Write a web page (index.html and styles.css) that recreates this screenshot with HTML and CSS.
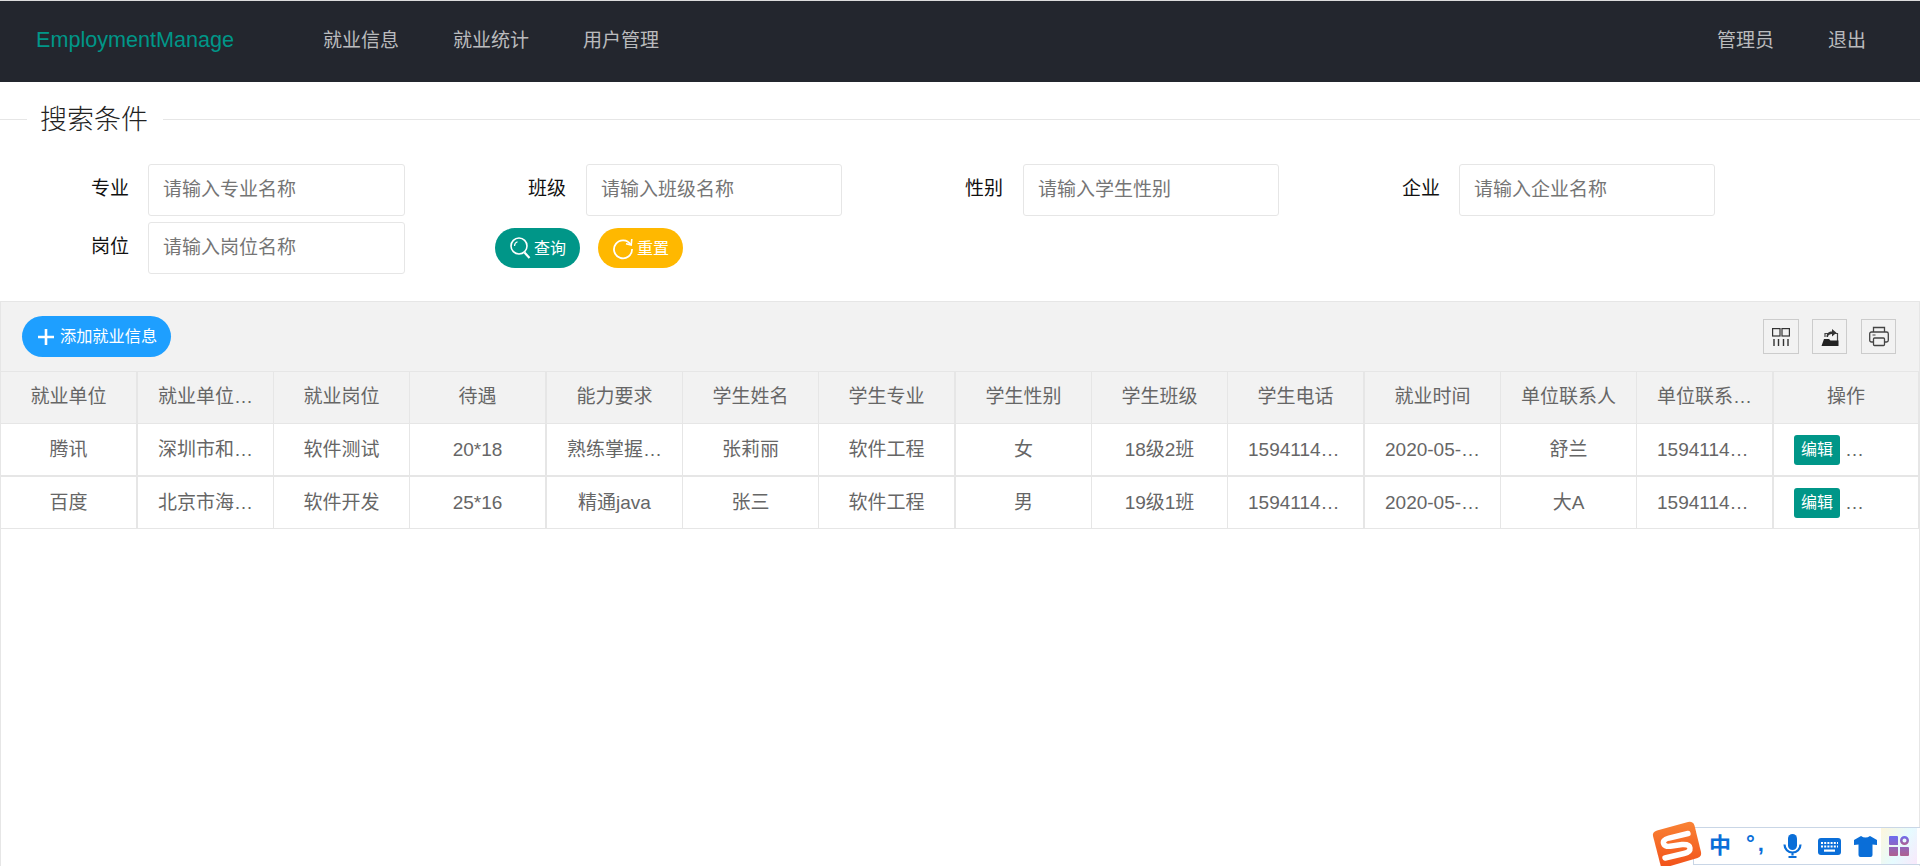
FILE: index.html
```html
<!DOCTYPE html>
<html lang="zh-CN">
<head>
<meta charset="utf-8">
<title>EmploymentManage</title>
<link rel="stylesheet" href="styles.css">
</head>
<body>
<header class="nav">
  <div class="logo">EmploymentManage</div>
  <nav class="menu">
    <a>就业信息</a><a>就业统计</a><a>用户管理</a>
  </nav>
  <div class="menu menu-right">
    <a>管理员</a><a>退出</a>
  </div>
</header>

<div class="legend"><span class="legend-title">搜索条件</span></div>

<form class="search">
  <div class="field"><label>专业</label><input placeholder="请输入专业名称"></div>
  <div class="field"><label>班级</label><input placeholder="请输入班级名称"></div>
  <div class="field"><label>性别</label><input placeholder="请输入学生性别"></div>
  <div class="field"><label>企业</label><input placeholder="请输入企业名称"></div>
  <div class="field"><label>岗位</label><input placeholder="请输入岗位名称"></div>
  <div class="actions">
    <button type="button" class="btn btn-green">
      <svg width="22" height="24" viewBox="0 0 22 24" fill="none" stroke="#fff"><circle cx="10" cy="10" r="8" stroke-width="1.6"/><path d="M5.500 10a4.500 4.500 0 0 1 3-4.200" stroke-width="1.200"/><path d="M15.500 16.500l5 5.500" stroke-width="2.200"/></svg>
      <span>查询</span>
    </button>
    <button type="button" class="btn btn-yellow">
      <svg width="22" height="24" viewBox="0 0 22 24" fill="none" stroke="#fff" stroke-width="1.800"><path d="M18.600 8.500A9 9 0 1 0 20 13"/><path d="M14 7.800l5.200 1.200 .6-6" stroke-width="1.600"/></svg>
      <span>重置</span>
    </button>
  </div>
</form>

<section class="panel">
  <div class="toolbar">
    <button type="button" class="btn-add">
      <svg width="16" height="16" viewBox="0 0 16 16"><path d="M8 0v16M0 8h16" stroke="#fff" stroke-width="2.600"/></svg>
      <span>添加就业信息</span>
    </button>
    <div class="tools">
      <span class="tool"><svg width="18" height="18" viewBox="0 0 18 18" fill="none" stroke="#333" stroke-width="1.200"><rect x=".6" y=".6" width="7.400" height="7.400"/><rect x="10" y=".6" width="7.400" height="7.400"/><path d="M2 11v7M6.500 11v7M11.500 11v7M16 11v7" stroke-width="1.400"/></svg></span>
      <span class="tool"><svg width="20" height="20" viewBox="0 0 20 20"><path d="M5 10V6.500h3M14 6.500h3.500V14" fill="none" stroke="#444" stroke-width="1.200"/><path d="M1.500 19l2.500-7h5l1.500 1.500h8V19z" fill="#222"/><path d="M6.500 10c0-4 2.500-5.500 5.500-5.500V2l4.500 3.800-4.500 3.700V7c-2 0-3.800 .8-4 3z" fill="#333"/></svg></span>
      <span class="tool"><svg width="20" height="21" viewBox="0 0 20 21" fill="none" stroke="#444" stroke-width="1.300"><path d="M4.500 6V1.500h11V6"/><path d="M4.500 16H2.500a1.800 1.800 0 0 1-1.800-1.800V7.800A1.800 1.800 0 0 1 2.500 6h15a1.800 1.800 0 0 1 1.800 1.800v6.400a1.800 1.800 0 0 1-1.800 1.800h-2"/><rect x="4.500" y="12" width="11" height="7.500" rx="1"/><path d="M3.500 9h3" stroke-width="1"/></svg></span>
    </div>
  </div>
  <table class="grid">
    <thead>
      <tr><th>就业单位</th><th class="clip">就业单位地址</th><th>就业岗位</th><th>待遇</th><th>能力要求</th><th>学生姓名</th><th>学生专业</th><th>学生性别</th><th>学生班级</th><th>学生电话</th><th>就业时间</th><th>单位联系人</th><th class="clip">单位联系电话</th><th>操作</th></tr>
    </thead>
    <tbody>
      <tr><td>腾讯</td><td class="clip">深圳市和平区科技园</td><td>软件测试</td><td>20*18</td><td class="clip">熟练掌握测试技术</td><td>张莉丽</td><td>软件工程</td><td>女</td><td>18级2班</td><td class="clip">15941140000</td><td class="clip">2020-05-20</td><td>舒兰</td><td class="clip">15941140000</td><td class="ops"><span class="tag">编辑</span><span class="more">…</span></td></tr>
      <tr><td>百度</td><td class="clip">北京市海淀区上地十街</td><td>软件开发</td><td>25*16</td><td>精通java</td><td>张三</td><td>软件工程</td><td>男</td><td>19级1班</td><td class="clip">15941140000</td><td class="clip">2020-05-20</td><td>大A</td><td class="clip">15941140000</td><td class="ops"><span class="tag">编辑</span><span class="more">…</span></td></tr>
    </tbody>
  </table>
</section>

<aside class="ime">
  <svg class="ime-logo" width="50" height="46" viewBox="0 0 50 46">
    <defs><linearGradient id="imeg" x1="0" y1="0" x2="0" y2="1"><stop offset="0" stop-color="#f98335"/><stop offset="1" stop-color="#f2521a"/></linearGradient></defs>
    <path d="M5 9.500 L36 1 Q41 0 42.500 4.500 L49 31 Q50 35.500 45.500 37 L15 46 H9 L1 15 Q0 11 5 9.500z" fill="url(#imeg)"/>
    <path d="M36 12.500 L17 17 Q9.500 19 12 23.500 Q13.500 26 20 25 L30 23.500 Q37.500 23 38 27 Q38.500 31 32 32.500 L13 37" fill="none" stroke="#fff" stroke-width="5.400" stroke-linecap="round"/>
  </svg>
  <span class="ime-zh">中</span>
  <span class="ime-punc">°,</span>
  <svg class="ime-mic" width="19" height="24" viewBox="0 0 19 24" fill="none" stroke="#0a6ed8"><rect x="5" y="0" width="9" height="16" rx="4.500" fill="#0a6ed8" stroke="none"/><path d="M1.500 10.500a8 8 0 0 0 16 0M9.500 18.500v3M5.500 23h8" stroke-width="2.200"/></svg>
  <svg class="ime-kb" width="23" height="17" viewBox="0 0 23 17"><rect width="23" height="17" rx="3" fill="#0a6ed8"/><path d="M3 5h17M3 8.500h17" stroke="#fff" stroke-width="2" stroke-dasharray="2 1.200"/><rect x="6" y="11.500" width="11" height="2.200" fill="#fff"/></svg>
  <svg class="ime-shirt" width="23" height="21" viewBox="0 0 23 21"><path d="M7 0 Q11.500 3 16 0 L23 4 V9 L18.500 8.500 V19 Q18.500 21 16.500 21 H6.500 Q4.500 21 4.500 19 V8.500 L0 9 V4z" fill="#0a6ed8"/></svg>
  <span class="ime-apps">
    <svg width="20" height="20" viewBox="0 0 20 20"><defs><linearGradient id="appg" x1="0" y1="0" x2="0" y2="1"><stop offset="0" stop-color="#6c6cf0"/><stop offset="1" stop-color="#b0608f"/></linearGradient></defs><path d="M1 0h7a1 1 0 0 1 1 1v8H1a1 1 0 0 1-1-1V1a1 1 0 0 1 1-1zM11 11h8a1 1 0 0 1 1 1v7a1 1 0 0 1-1 1h-7a1 1 0 0 1-1-1zM0 11h9v8a1 1 0 0 1-1 1H1a1 1 0 0 1-1-1z" fill="url(#appg)"/><path d="M15.500 0a4.500 4.500 0 1 1 0 9 4.500 4.500 0 1 1 0-9zm0 2.500a2 2 0 1 0 0 4 2 2 0 1 0 0-4z" fill="url(#appg)"/></svg>
  </span>
</aside>
</body>
</html>
```

FILE: styles.css
```css
* { box-sizing: border-box; }

html, body {
  margin: 0;
  height: 866px;
  overflow: hidden;
}

body {
  display: flex;
  flex-direction: column;
  background: #fff;
  color: #666;
  font-family: "Liberation Sans", "Noto Sans CJK SC", sans-serif;
  font-size: 19px;
}

/* top bar */
.nav {
  flex: none;
  display: flex;
  align-items: center;
  height: 82px;
  padding-right: 54px;
  padding-bottom: 3px;
  background: #23262e;
  border-top: 1px solid #dcdcdc;
}

.logo {
  flex: none;
  width: 323px;
  padding-left: 36px;
  color: #009688;
  font-size: 21.6px;
}

.menu {
  display: flex;
  gap: 54px;
  padding-bottom: 3px;
  color: rgba(255, 255, 255, .7);
  font-size: 19px;
}

.menu-right { margin-left: auto; }

/* legend */
.legend {
  flex: none;
  display: flex;
  align-items: center;
  height: 38px;
  margin-top: 18px;
}

.legend::before,
.legend::after {
  content: "";
  height: 1px;
  background: #e6e6e6;
}

.legend::before { flex: none; width: 27px; }
.legend::after { flex: 1; }

.legend-title {
  padding: 2px 15px 0 13px;
  color: #222;
  font-size: 27px;
  font-weight: 300;
  line-height: 38px;
}

/* search form */
.search {
  flex: none;
  display: grid;
  grid-template-columns: repeat(4, 437px);
  row-gap: 6px;
  margin-top: 26px;
}

.field {
  display: flex;
  align-items: center;
  height: 52px;
}

.field label {
  flex: none;
  width: 129px;
  margin-right: 19px;
  padding-bottom: 8px;
  color: #111;
  font-size: 19px;
  text-align: right;
}

.field input {
  width: 256px;
  height: 52px;
  padding: 0 14px;
  border: 1px solid #e6e6e6;
  border-radius: 3px;
  outline: none;
  font: inherit;
  color: #666;
  background: #fff;
}

.field:first-child input,
.field:nth-child(5) input { width: 257px; }

.field:nth-child(2) input,
.field:nth-child(3) input { margin-left: 1px; }

.field input::placeholder { color: #757575; }

.actions {
  display: flex;
  align-items: center;
  gap: 18px;
  padding-left: 58px;
}

.btn {
  display: flex;
  align-items: center;
  justify-content: center;
  gap: 3px;
  width: 85px;
  height: 40px;
  padding: 0;
  border: 0;
  border-radius: 20px;
  color: #fff;
  font: inherit;
  font-size: 16px;
}

.btn span { padding-bottom: 3px; }

.btn-green { background: #009688; }
.btn-yellow { background: #ffb800; }

/* table panel */
.panel {
  flex: 1;
  margin-top: 27px;
  border: 1px solid #e6e6e6;
  border-bottom: 0;
}

.toolbar {
  display: flex;
  align-items: center;
  justify-content: space-between;
  height: 70px;
  padding: 0 23px 0 21px;
  background: #f2f2f2;
  border-bottom: 1px solid #e6e6e6;
}

.btn-add {
  display: flex;
  align-items: center;
  gap: 6px;
  width: 149px;
  height: 41px;
  padding: 0 0 0 16px;
  border: 0;
  border-radius: 21px;
  background: #1e9fff;
  color: #fff;
  font: inherit;
  font-size: 16.2px;
}

.btn-add span { padding-bottom: 3px; }

.tools {
  display: flex;
  gap: 13px;
}

.tool {
  display: flex;
  align-items: center;
  justify-content: center;
  width: 36px;
  height: 35px;
  border: 1px solid #ccc;
}

.tool + .tool { width: 35px; }
.tool + .tool + .tool { margin-left: 1px; }

/* grid */
.grid {
  width: 1918px;
  table-layout: fixed;
  border-collapse: separate;
  border-spacing: 0;
}

.grid th,
.grid td {
  width: 136px;
  padding: 1px 19px 0;
  border-right: 1px solid #e6e6e6;
  border-bottom: 1px solid #e6e6e6;
  overflow: hidden;
  color: #666;
  font-weight: 400;
  line-height: 26px;
  text-align: center;
  text-overflow: ellipsis;
  white-space: nowrap;
}

.grid th { height: 52px; padding-top: 0; padding-bottom: 2px; background: #f2f2f2; }
.grid td { height: 52px; }
.grid tbody tr:first-child td { height: 53px; border-bottom-width: 2px; }

.grid th.clip,
.grid td.clip {
  padding-left: 20px;
  padding-right: 18px;
}

.grid th:nth-child(3n + 1),
.grid td:nth-child(3n + 1) {
  width: 137px;
  border-right-width: 2px;
}

.grid th:last-child,
.grid td:last-child {
  width: 145px;
  border-right-width: 1px;
}

.grid td.ops {
  padding: 0 0 0 20px;
  text-align: left;
}

.tag {
  display: inline-block;
  width: 46px;
  height: 30px;
  border-radius: 3px;
  background: #009688;
  color: #fff;
  font-size: 16px;
  line-height: 30px;
  text-align: center;
  vertical-align: middle;
}

.more {
  margin-left: 5px;
  vertical-align: middle;
}

/* input method bar */
.ime {
  position: absolute;
  right: 0;
  bottom: 1px;
  display: flex;
  align-items: center;
  width: 227px;
  height: 38px;
  background: #fff;
  border: 1px solid #c9d6e6;
  border-right: 0;
  color: #0a6ed8;
}

.ime-logo {
  position: absolute;
  left: -42px;
  top: -7px;
}

.ime-zh {
  margin-left: 15px;
  width: 24px;
  font-size: 22px;
  font-weight: 700;
  line-height: 1;
}

.ime-punc {
  margin-left: 13px;
  width: 20px;
  padding-bottom: 4px;
  font-size: 22px;
  font-weight: 700;
  letter-spacing: 3px;
  line-height: 1;
}

.ime-mic { margin-left: 17px; }
.ime-kb { margin-left: 16px; }
.ime-shirt { margin-left: 13px; }

.ime-apps {
  display: flex;
  align-items: center;
  justify-content: center;
  width: 36px;
  height: 36px;
  margin-left: 4px;
  background: linear-gradient(120deg, #fdf6dc, #e6fbff 55%, #f9e8fb);
}
```
